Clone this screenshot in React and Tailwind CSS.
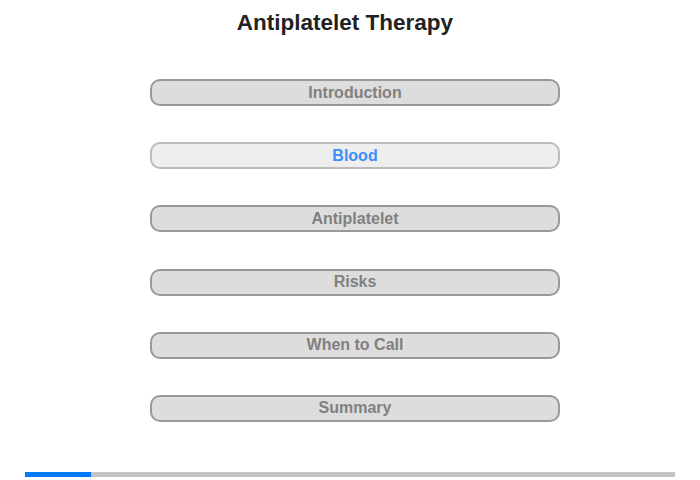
const sections = ["Introduction", "Blood", "Antiplatelet", "Risks", "When to Call", "Summary"];

export default function App() {
  const active = 1;

  return (
    <div className="w-[700px] h-[480px] bg-white font-['Liberation_Sans',Arial,sans-serif] flex flex-col">
      {/* Title */}
      <h1 className="pt-[10px] pr-[10px] text-center text-[22.5px] leading-[26px] font-bold text-[#222222]">
        Antiplatelet Therapy
      </h1>

      {/* Section menu */}
      <div className="mt-[43px] ml-[150px] w-[410px] flex flex-col gap-[36.2px]">
        {sections.map((s, i) => (
          <button
            key={s}
            className={
              i === active
                ? "h-[27px] rounded-[10px] border-2 border-[#bbbbbb] bg-[#eeeeee] text-[16px] font-bold text-[#3a8ffa] leading-none"
                : "h-[27px] rounded-[10px] border-2 border-[#999999] bg-[#dddddd] text-[16px] font-bold text-[#808080] leading-none"
            }
          >
            {s}
          </button>
        ))}
      </div>

      {/* Progress */}
      <div className="mt-auto mb-[3px] mx-[25px] h-[5px] bg-[#c4c4c4] flex">
        <div className="w-[66px] h-full bg-[#007bff]" />
      </div>
    </div>
  );
}
